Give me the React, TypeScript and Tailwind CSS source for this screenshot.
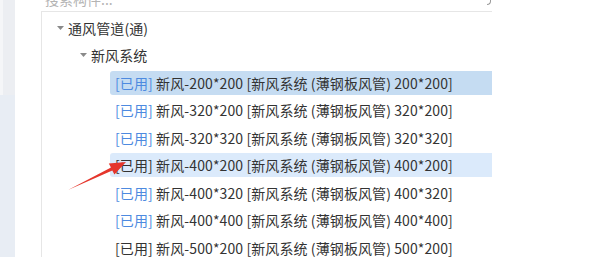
import React from "react";

type Item = { size: string; tagBlue: boolean; state?: "selected" | "hover" };

const items: Item[] = [
  { size: "200*200", tagBlue: true, state: "selected" },
  { size: "320*200", tagBlue: true },
  { size: "320*320", tagBlue: true },
  { size: "400*200", tagBlue: false, state: "hover" },
  { size: "400*320", tagBlue: true },
  { size: "400*400", tagBlue: true },
  { size: "500*200", tagBlue: false },
];

function Caret() {
  return (
    <svg width="7" height="4" viewBox="0 0 7 4" className="shrink-0">
      <polygon points="0,0 7,0 3.5,4" fill="#8a8a8a" />
    </svg>
  );
}

export default function App() {
  return (
    <div
      className="relative w-[595px] h-[257px] overflow-hidden bg-white flex text-[14px] text-[#333]"
      style={{ fontFamily: '"Noto Sans CJK SC", "Noto Sans", sans-serif' }}
    >
      {/* left strip */}
      <div className="w-[15px] flex flex-col shrink-0">
        <div className="h-[95px] flex shrink-0">
          <div className="w-[3px] bg-[#f5f6f8]" />
          <div className="flex-1 bg-[#eceef2]" />
        </div>
        <div className="flex-1 bg-[#e8edf4]" />
      </div>
      <div className="w-[26px] shrink-0 bg-white" />

      {/* main column */}
      <div className="w-[451px] shrink-0 flex flex-col">
        <div className="h-[11px] shrink-0 overflow-hidden flex justify-between pl-[4px]">
          <span className="leading-[14px] mt-[-8px] text-[#b4b4b4]">搜索构件...</span>
          <div className="w-[4px] h-[5px] mr-[1px] border-r border-b border-[#9a9a9a] rounded-br-[4px]" />
        </div>
        <div className="flex-1 min-h-0 overflow-hidden border-t border-l border-[#e6e6e6] pt-[2px] flex flex-col tracking-[0.1px]">
          <div className="h-[27.5px] shrink-0 flex items-center pl-[15px] gap-[4px] leading-none">
            <Caret />
            <span>通风管道(通)</span>
          </div>
          <div className="h-[27.5px] shrink-0 flex items-center pl-[38px] gap-[4px] leading-none">
            <Caret />
            <span>新风系统</span>
          </div>
          {items.map((it) => (
            <div key={it.size} className="h-[27.5px] shrink-0 flex items-center">
              <div
                className={
                  "ml-[68px] flex-1 h-[24px] flex items-center pl-[5px] rounded-l-[3px] whitespace-nowrap leading-none " +
                  (it.state === "selected"
                    ? "bg-[#c5dcf2]"
                    : it.state === "hover"
                    ? "bg-[#dbeafb]"
                    : "")
                }
              >
                <span className={it.tagBlue ? "text-[#4d8ae0]" : "text-[#333]"}>[已用]</span>
                <span>&nbsp;新风-{it.size} [新风系统 (薄钢板风管) {it.size}]</span>
              </div>
            </div>
          ))}
        </div>
      </div>
      <div className="flex-1 bg-white" />

      {/* red annotation arrow */}
      <svg
        className="absolute left-0 top-0 pointer-events-none"
        width="595"
        height="257"
        viewBox="0 0 595 257"
      >
        <polygon
          points="68,190 112.3,170.4 114.4,174.6 126,162 108.8,163.4 111,167.6"
          fill="#e5362c"
        />
      </svg>
    </div>
  );
}
